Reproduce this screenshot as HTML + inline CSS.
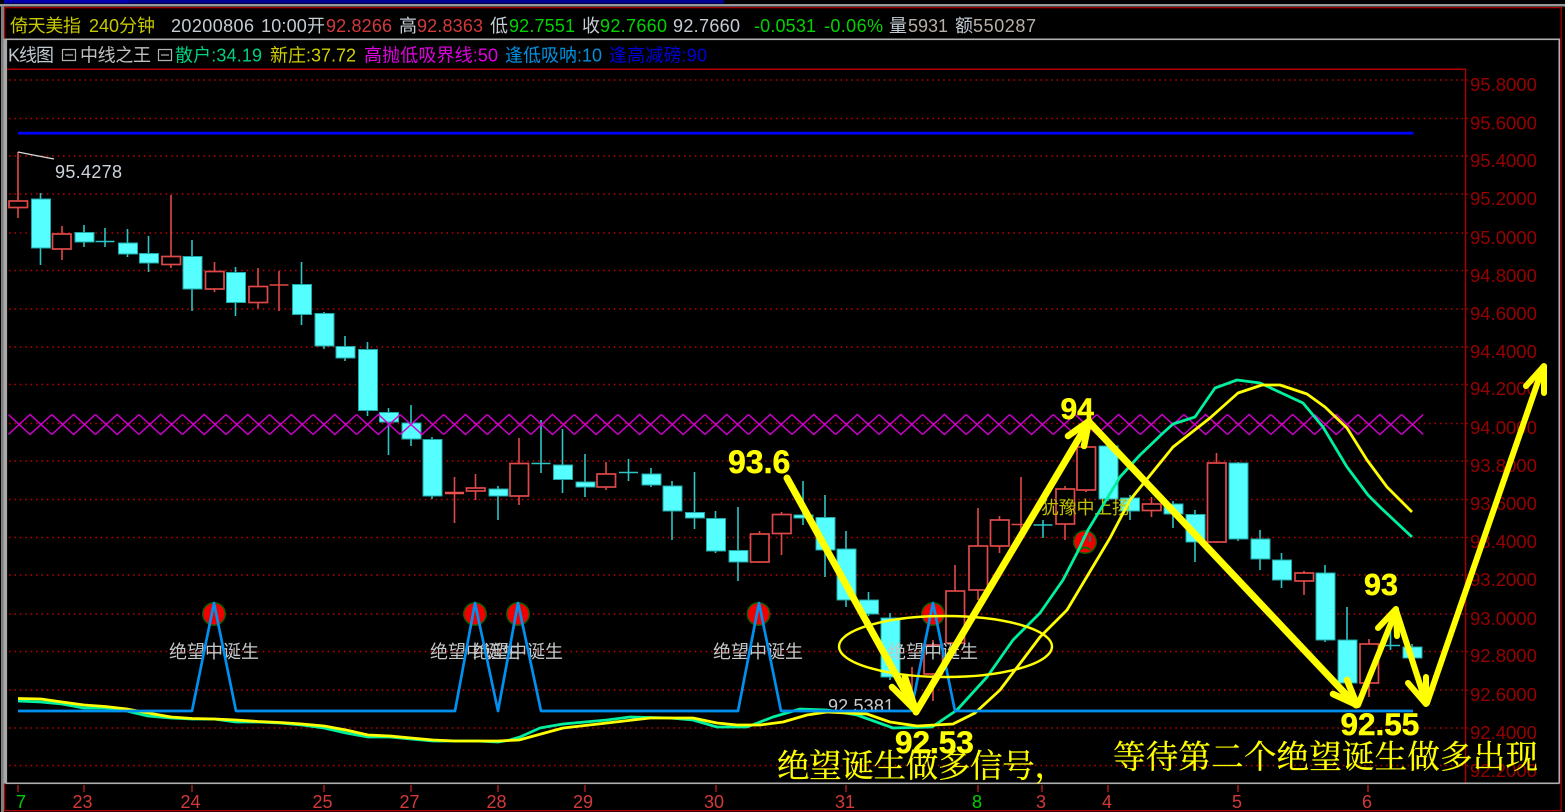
<!DOCTYPE html>
<html lang="zh">
<head>
<meta charset="utf-8">
<title>K线图</title>
<style>
html,body{margin:0;padding:0;background:#000;width:1565px;height:812px;overflow:hidden}
svg{display:block;position:absolute;left:0;top:0}
text{font-family:"Liberation Sans","Noto Sans CJK SC",sans-serif;font-size:18px}
.g{fill:#c4ccd4}.r{fill:#d23a3a}.gr{fill:#00d400}.ax{fill:#960000;font-size:18.5px}
.lb{fill:#c4c8c8}
.by{fill:#ffff00;stroke:#ffff00;stroke-width:.5;font-weight:bold;font-size:32px}
.sy{fill:#ffff00;stroke:#ffff00;stroke-width:.25;font-family:"Liberation Serif","Noto Serif CJK SC",serif;font-size:32.5px}
</style>
</head>
<body>
<svg width="1565" height="812" viewBox="0 0 1565 812" xmlns="http://www.w3.org/2000/svg">
<defs>
<pattern id="zz" patternUnits="userSpaceOnUse" x="8.3" y="413.5" width="43.54" height="22">
<path d="M0 1L21.77 21L43.54 1M0 21L21.77 1L43.54 21" fill="none" stroke="#d000d0" stroke-width="1.5"/>
</pattern>
</defs>

<!-- frame -->
<rect x="0" y="0" width="1565" height="812" fill="#000"/>
<rect x="4" y="0" width="125" height="3.5" fill="#0000b0"/>
<rect x="129" y="0" width="595" height="3.5" fill="#000090"/>
<rect x="0" y="4" width="1565" height="2.5" fill="#999"/>
<rect x="1" y="6" width="3" height="806" fill="#808080"/>
<rect x="4" y="7" width="1558" height="1.3" fill="#a00000"/>
<rect x="4" y="7" width="1.2" height="804" fill="#b00000"/>
<rect x="1560.5" y="7" width="1.2" height="804" fill="#b00000"/>
<rect x="4" y="810" width="1558" height="1.3" fill="#b00000"/>
<rect x="3.5" y="38.5" width="3.6" height="745" fill="#a8a8a8"/>
<rect x="5.5" y="38.5" width="1554" height="1.6" fill="#b0b0b0"/>
<rect x="1558.5" y="38.5" width="1.6" height="745" fill="#b0b0b0"/>
<rect x="5.5" y="782.5" width="1554" height="1.6" fill="#b0b0b0"/>
<rect x="7" y="68.5" width="1458.5" height="1.5" fill="#b00000"/>
<rect x="1464.8" y="68.5" width="1.5" height="714" fill="#a80000"/>

<!-- header -->
<text x="10" y="32" fill="#c8c800" textLength="71">倚天美指</text>
<text x="89" y="32" fill="#c8c800" textLength="66">240分钟</text>
<text class="g" x="171" y="32" textLength="83">20200806</text>
<text class="g" x="261" y="32" textLength="64">10:00开</text>
<text class="r" x="326" y="32" textLength="66">92.8266</text>
<text class="g" x="399" y="32">高</text>
<text class="r" x="417" y="32" textLength="66">92.8363</text>
<text class="g" x="490" y="32">低</text>
<text class="gr" x="509" y="32" textLength="66">92.7551</text>
<text class="g" x="582" y="32">收</text>
<text class="gr" x="600" y="32" textLength="67">92.7660</text>
<text class="g" x="673" y="32" textLength="67">92.7660</text>
<text class="gr" x="754" y="32" textLength="62">-0.0531</text>
<text class="gr" x="824" y="32" textLength="59">-0.06%</text>
<text class="g" x="889" y="32">量</text>
<text fill="#b8b0a8" x="908" y="32" textLength="40">5931</text>
<text class="g" x="955" y="32">额</text>
<text fill="#b8b0a8" x="973" y="32" textLength="63">550287</text>

<!-- indicator line -->
<text fill="#c0c8d0" x="8" y="61.5" textLength="46">K线图</text>
<path d="M62.5 49.5h13v11h-13zM65 55h8" fill="none" stroke="#b0b0b0" stroke-width="1.2"/>
<text fill="#c0c0c0" x="80" y="61.5" textLength="71">中线之王</text>
<path d="M158.5 49.5h13v11h-13zM161 55h8" fill="none" stroke="#b0b0b0" stroke-width="1.2"/>
<text fill="#00d080" x="175" y="61.5" textLength="87">散户:34.19</text>
<text fill="#d0d000" x="270" y="61.5" textLength="86">新庄:37.72</text>
<text fill="#e000e0" x="364" y="61.5" textLength="134">高抛低吸界线:50</text>
<text fill="#0090e0" x="505" y="61.5" textLength="97">逢低吸呐:10</text>
<text fill="#0000d8" x="609" y="61.5" textLength="98">逢高减磅:90</text>

<!-- grid -->
<g fill="none" stroke="#c00000" stroke-width="1.5" stroke-dasharray="1.5 3.9">
<path d="M9 80H1464M9 118.5H1464M9 156H1464M9 194H1464M9 233H1464M9 270.5H1464M9 309H1464M9 347H1464M9 384.5H1464M9 423.5H1464M9 461H1464M9 499.5H1464M9 537.5H1464M9 575H1464M9 614H1464M9 651.5H1464M9 690H1464M9 728H1464M9 765.5H1464"/>
</g>
<path d="M1465 80h3M1465 118.5h3M1465 156h3M1465 194h3M1465 233h3M1465 270.5h3M1465 309h3M1465 347h3M1465 384.5h3M1465 423.5h3M1465 461h3M1465 499.5h3M1465 537.5h3M1465 575h3M1465 614h3M1465 651.5h3M1465 690h3M1465 728h3M1465 765.5h3" stroke="#a00000" stroke-width="1.2"/>

<!-- axis labels -->
<g>
<text class="ax" x="1470" y="91">95.8000</text>
<text class="ax" x="1470" y="129.5">95.6000</text>
<text class="ax" x="1470" y="167">95.4000</text>
<text class="ax" x="1470" y="205">95.2000</text>
<text class="ax" x="1470" y="244">95.0000</text>
<text class="ax" x="1470" y="282">94.8000</text>
<text class="ax" x="1470" y="320">94.6000</text>
<text class="ax" x="1470" y="358">94.4000</text>
<text class="ax" x="1470" y="395">94.2000</text>
<text class="ax" x="1470" y="434">94.0000</text>
<text class="ax" x="1470" y="472">93.8000</text>
<text class="ax" x="1470" y="510">93.6000</text>
<text class="ax" x="1470" y="548">93.4000</text>
<text class="ax" x="1470" y="586">93.2000</text>
<text class="ax" x="1470" y="625">93.0000</text>
<text class="ax" x="1470" y="662">92.8000</text>
<text class="ax" x="1470" y="701">92.6000</text>
<text class="ax" x="1470" y="739">92.4000</text>
<text class="ax" x="1470" y="777">92.2000</text>
</g>

<!-- time axis -->
<path d="M18 785v7M84 785v7M192 785v7M324 785v7M411 785v7M498 785v7M585 785v7M716 785v7M846 785v7M978 785v7M1042 785v7M1108 785v7M1238 785v7M1368 785v7" stroke="#c02020" stroke-width="1.3"/>
<text fill="#00d000" x="16" y="808">7</text>
<text class="r" x="72.5" y="808">23</text>
<text class="r" x="180.5" y="808">24</text>
<text class="r" x="312.5" y="808">25</text>
<text class="r" x="399.5" y="808">27</text>
<text class="r" x="486.5" y="808">28</text>
<text class="r" x="573" y="808">29</text>
<text class="r" x="704" y="808">30</text>
<text class="r" x="835" y="808">31</text>
<text fill="#00d000" x="972" y="808">8</text>
<text class="r" x="1036" y="808">3</text>
<text class="r" x="1102" y="808">4</text>
<text class="r" x="1232" y="808">5</text>
<text class="r" x="1362" y="808">6</text>

<!-- wicks: cyan -->
<path fill="none" stroke="#2cc4c4" stroke-width="1.6" d="M40.5 193V265M84 225V247M105 228V247M127.5 229V257M148.5 236V272M192 240V311M235.5 267V316M301.5 262V325M324 312V349M345 336V361M367.5 342V416M388.5 408V455M411 405V446M432 437V499M498 486V520M541 420V473M562.5 429V493M585 454V497M628.5 459V481M651 468V487M672 481V540M694.5 472V529M715.5 511V553M738 507V581M803 481V525M825 495V577M846 531V607M868.5 592V616M890 613V680M1043 520V538M1108 445V501M1130 495V520M1173 501V528M1195 510V562M1238 462V541M1260 530V570M1281.5 553V588M1325 565V642M1347 607V685M1390.5 631V650M1412 644V660"/>
<path fill="none" stroke="#2cc4c4" stroke-width="1.6" d="M95.5 241.5h19M531.5 463.5h19M619 472.5h19M1033.5 525h19M1381 645.5h19"/>

<!-- wicks: red -->
<path fill="none" stroke="#e04848" stroke-width="1.6" d="M18 152V218M62 226V260M171 195V268M214.5 262V292M258 268V308.5M279 271V311M454.5 477V523M475.5 474V500M519 438V505M606 462V490M759.5 531V563M781.5 512V555M912 667V700M933 640V701M955 565V645M978 508V600M999.5 516V553M1021 477V540M1065 486V540M1086 447V492M1151.5 497V517M1216.5 453V543M1304 571V595M1369 639V697"/>
<path fill="none" stroke="#e04848" stroke-width="1.6" d="M269.5 285h19"/>
<path fill="none" stroke="#f05050" stroke-width="2.6" d="M445 493h19"/>
<path fill="none" stroke="#e04848" stroke-width="1.6" d="M1011.5 524.5h19"/>

<!-- red bodies -->
<g fill="#000" stroke="#e04848" stroke-width="1.7">
<rect x="9" y="201" width="18.5" height="6.5"/>
<rect x="52.5" y="234" width="18.5" height="15"/>
<rect x="162" y="256.5" width="18.5" height="8"/>
<rect x="205.5" y="271.5" width="18.5" height="17.5"/>
<rect x="249" y="286.5" width="18.5" height="16"/>
<rect x="466.5" y="488" width="18.5" height="3"/>
<rect x="510" y="463.5" width="18.5" height="32.5"/>
<rect x="597" y="474" width="18.5" height="13"/>
<rect x="750.5" y="534" width="18.5" height="28"/>
<rect x="772.5" y="514.5" width="18.5" height="19"/>
<rect x="924" y="645" width="18.5" height="29"/>
<rect x="946" y="591" width="18.5" height="52"/>
<rect x="969" y="546" width="18.5" height="44"/>
<rect x="990.5" y="520" width="18.5" height="26"/>
<rect x="1056" y="489" width="18.5" height="35"/>
<rect x="1077" y="447" width="18.5" height="43"/>
<rect x="1142.5" y="504" width="18.5" height="6.5"/>
<rect x="1207.5" y="463" width="18.5" height="79"/>
<rect x="1295" y="573" width="18.5" height="8"/>
<rect x="1360" y="644" width="18.5" height="39"/>
</g>

<!-- cyan bodies -->
<g fill="#55ffff" stroke="#1fa8a8" stroke-width="1">
<rect x="31.5" y="199" width="19" height="49"/>
<rect x="75" y="232.5" width="19" height="9.5"/>
<rect x="118.5" y="243" width="19" height="11"/>
<rect x="139.5" y="253.5" width="19" height="9.5"/>
<rect x="183" y="256.5" width="19" height="32.5"/>
<rect x="226.5" y="272.5" width="19" height="30"/>
<rect x="292.5" y="284.5" width="19" height="30"/>
<rect x="315" y="313.5" width="19" height="32.5"/>
<rect x="336" y="346.5" width="19" height="11.5"/>
<rect x="358.5" y="349.5" width="19" height="61"/>
<rect x="379.5" y="412.5" width="19" height="9.5"/>
<rect x="402" y="423" width="19" height="16"/>
<rect x="423" y="439.5" width="19" height="56.5"/>
<rect x="489" y="489" width="19" height="7"/>
<rect x="553.5" y="465" width="19" height="14.5"/>
<rect x="576" y="482" width="19" height="5"/>
<rect x="642" y="474" width="19" height="11"/>
<rect x="663" y="486" width="19" height="25"/>
<rect x="685.5" y="512.5" width="19" height="5.5"/>
<rect x="706.5" y="518.5" width="19" height="32.5"/>
<rect x="729" y="550.5" width="19" height="11.5"/>
<rect x="794" y="515" width="19" height="3"/>
<rect x="816" y="517.5" width="19" height="32.5"/>
<rect x="837" y="549" width="19" height="51"/>
<rect x="859.5" y="600" width="19" height="14"/>
<rect x="881" y="618" width="19" height="59"/>
<rect x="1099" y="446" width="19" height="53"/>
<rect x="1120.5" y="498" width="19" height="13"/>
<rect x="1164" y="504" width="19" height="10"/>
<rect x="1186" y="514.5" width="19" height="27.5"/>
<rect x="1229" y="463" width="19" height="76"/>
<rect x="1251" y="539" width="19" height="20"/>
<rect x="1272.5" y="560" width="19" height="20"/>
<rect x="1316" y="573" width="19" height="67"/>
<rect x="1338" y="640" width="19" height="43"/>
<rect x="1403" y="647" width="19" height="11"/>
</g>

<!-- magenta cross band -->
<rect x="8.3" y="413.5" width="1415" height="22" fill="url(#zz)"/>

<!-- blue top line -->
<rect x="18" y="131.8" width="1395.5" height="2.8" fill="#0000ff"/>

<!-- high marker -->
<polyline points="18,152 28,154 54,159" fill="none" stroke="#d8d8d8" stroke-width="1.3"/>
<text fill="#ccd4dc" x="55" y="178" textLength="67">95.4278</text>

<!-- red signal circles -->
<g fill="#f00000" stroke="#006400" stroke-width="1.3">
<circle cx="214" cy="614" r="11.3"/>
<circle cx="475" cy="614" r="11.3"/>
<circle cx="518" cy="614" r="11.3"/>
<circle cx="758.5" cy="614" r="11.3"/>
<circle cx="933" cy="614" r="11.3"/>
<circle cx="1085" cy="542" r="11.3"/>
</g>
<path d="M1083 536v6M1090 536v6" stroke="#008080" stroke-width="1.6"/>
<path d="M1079.5 550q5.5 -5 11 0" stroke="#007000" stroke-width="1.8" fill="none"/>

<!-- labels -->
<text class="lb" x="169" y="658" textLength="90">绝望中诞生</text>
<text class="lb" x="430" y="658" textLength="90">绝望中诞生</text>
<text class="lb" x="473" y="658" textLength="90">绝望中诞生</text>
<text class="lb" x="713" y="658" textLength="90">绝望中诞生</text>
<text class="lb" x="888" y="658" textLength="90">绝望中诞生</text>
<text fill="#c0c000" x="1041" y="514" textLength="89">犹豫中上扬</text>
<text fill="#c8ccd0" x="828" y="712" textLength="66">92.5381</text>

<!-- MA lines -->
<polyline fill="none" stroke="#00f0a0" stroke-width="2.8" stroke-linejoin="round" points="18,701 41,702 62,704 84,708 105,708 127,711 148,716 171,718 192,719 214,719 236,722 258,722 280,723 302,725 324,728 346,733 368,737 390,737 411,739 433,741 455,741 477,741 498,742 510,740 520,737 540,728 563,724 607,720 630,717 670,718 693,720 717,727 747,727 773,717 800,709 827,710 857,715 893,728 932,727 957,710 987,677 1013,640 1040,613 1063,580 1077,553 1088,530 1120,477 1140,455 1163,433 1173,424 1195,417 1215,388 1237,380 1260,383 1303,403 1323,427 1347,467 1368,495 1380,507 1412,537"/>
<polyline fill="none" stroke="#ffff00" stroke-width="2.8" stroke-linejoin="round" points="18,698.5 41,699 62,702 84,705 105,706.5 127,709 148,713 171,717 192,718.5 214,719 236,720 258,721.5 280,722.5 302,724 324,726 346,730 368,735 390,736 411,738 433,740 455,741 477,741 498,741 519,740 541,734 563,728 607,723 650,718 693,718 717,723 737,725 760,725 783,722 807,715 827,712 867,714 890,722 917,726 953,724 975,713 1000,690 1040,637 1067,610 1110,538 1130,500 1173,447 1210,418 1238,393 1262,385 1280,385 1307,394 1325,407 1347,428 1367,460 1387,487 1412,512"/>

<!-- indicator polyline -->
<polyline fill="none" stroke="#0090f0" stroke-width="2.7" stroke-linejoin="round" points="18,711 192,711 214,603 236,711 455,711 475,603 498,711 518,603 541,711 738,711 759,603 781,711 911,711 933,603 955,711 1413,711"/>

<!-- ellipse -->
<ellipse cx="945.5" cy="646.5" rx="106.5" ry="30.5" fill="none" stroke="#ffff00" stroke-width="2.4"/>

<!-- arrows -->
<g fill="none" stroke="#ffff00" stroke-linecap="round" stroke-linejoin="round">
<path d="M787 478L916 711" stroke-width="7"/>
<path d="M892 687L916 711L905 677" stroke-width="6.5"/>
<path d="M916 712L1088 423" stroke-width="7"/>
<path d="M1068 436L1089 421L1084 446" stroke-width="6.5"/>
<path d="M1090 423L1356 705" stroke-width="7"/>
<path d="M1333 694L1357 705L1347 680" stroke-width="6.5"/>
<path d="M1358 705L1396 611" stroke-width="6"/>
<path d="M1378 628L1396 609L1397 636" stroke-width="6"/>
<path d="M1396 610L1426 703" stroke-width="6"/>
<path d="M1408 683L1426 704L1426 677" stroke-width="6"/>
<path d="M1427 703L1543 367" stroke-width="6"/>
<path d="M1526 386L1544 366L1544 393" stroke-width="6"/>
</g>
<g fill="#ffff00">
<polygon points="916,713 901.6,697.4 909.4,691.4"/>
<polygon points="1089,420 1076.4,429.6 1086,435.6"/>
<polygon points="1357,706 1342.6,698.8 1351,690.4"/>
<polygon points="1396,608 1385.2,620 1396.6,624.8"/>
<polygon points="1426,705 1415.2,691.8 1426,688.2"/>
<polygon points="1544,365 1533,377.6 1544,381.8"/>
</g>

<!-- annotation text -->
<text class="by" x="728" y="473">93.6</text>
<text class="by" x="1060.5" y="419" style="font-size:30px">94</text>
<text class="by" x="1364" y="595" style="font-size:30.5px">93</text>
<text class="by" x="1340.5" y="735" style="font-size:31.5px">92.55</text>
<text class="by" x="895" y="753" style="font-size:31.5px">92.53</text>
<text class="sy" x="777" y="777" textLength="290">绝望诞生做多信号，</text>
<text class="sy" x="1113" y="768" textLength="425">等待第二个绝望诞生做多出现</text>
</svg>
</body>
</html>
